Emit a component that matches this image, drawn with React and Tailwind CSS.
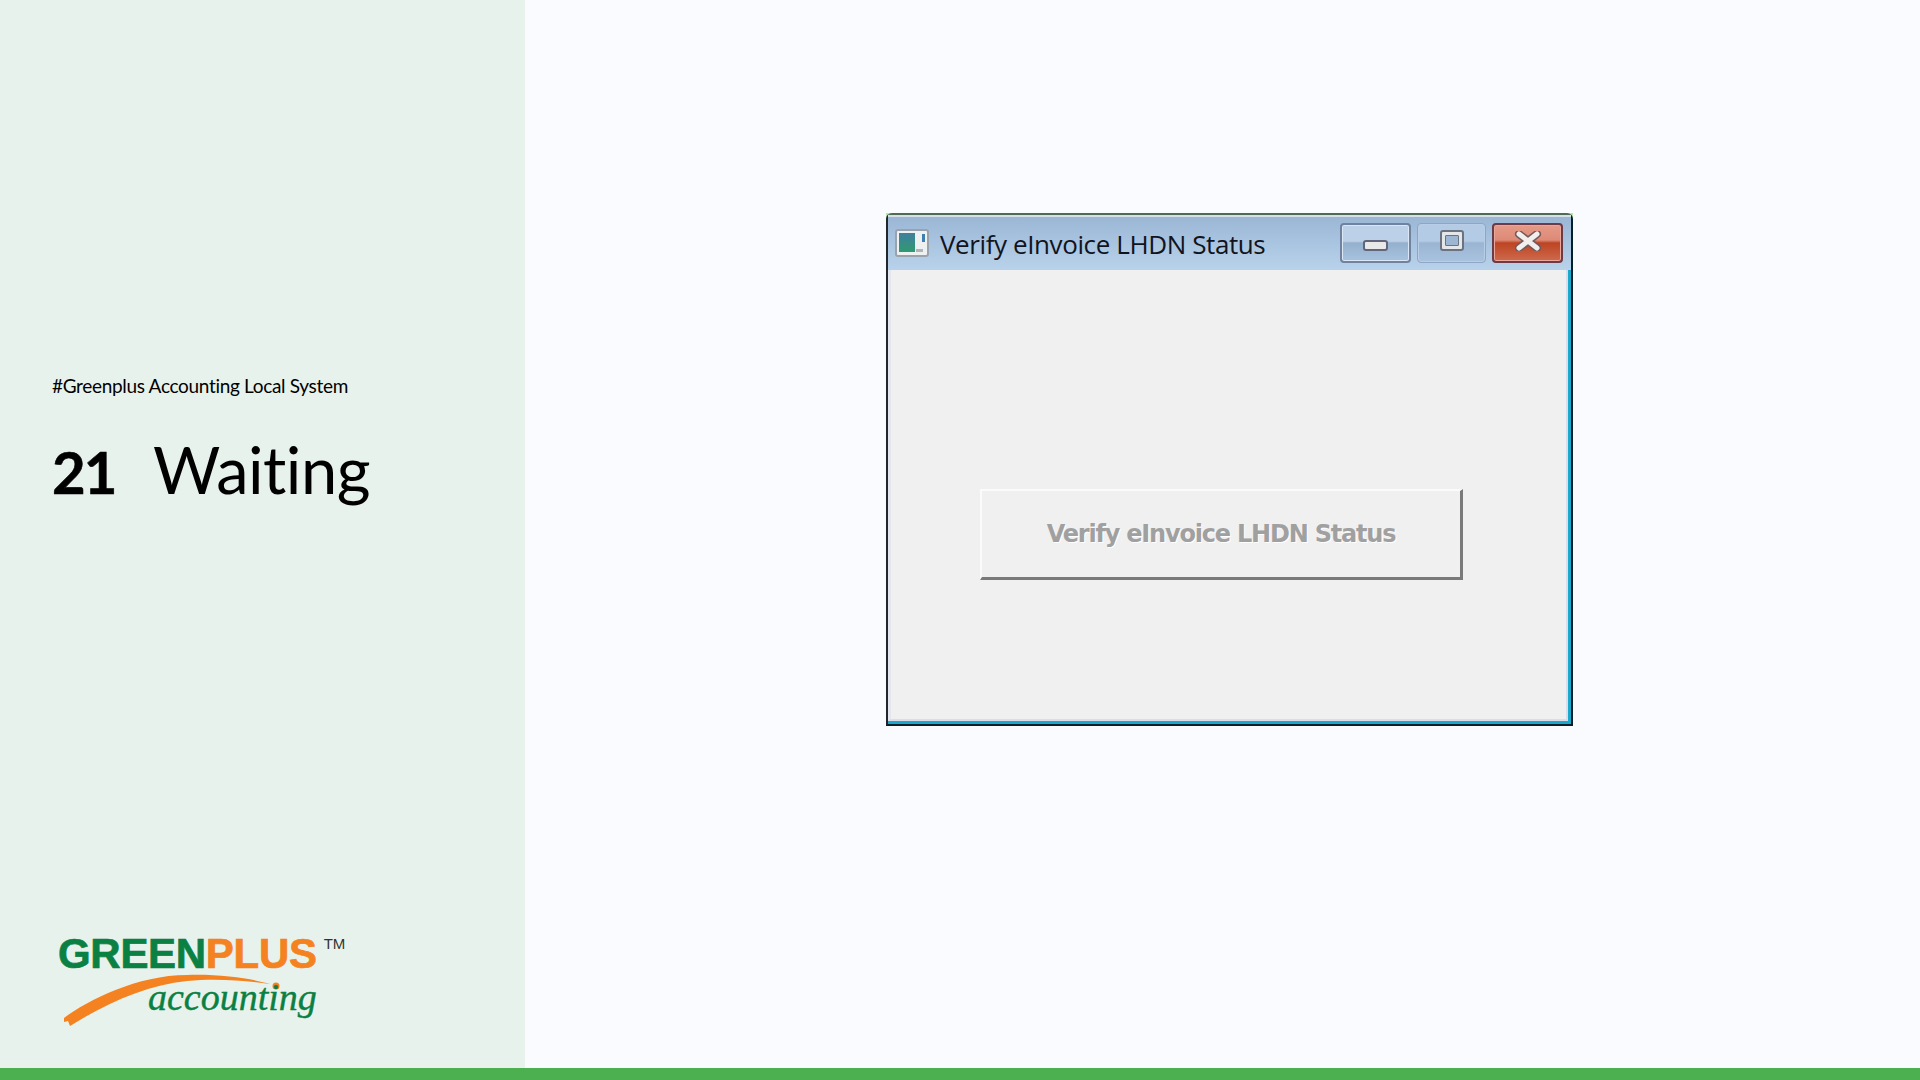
import React from 'react';

function CaptionButtons() {
  return (
    <div className="flex items-center">
      <div className="w-[71px] h-[40px] rounded-[4px] border-2 border-[#6f83a0] shadow-[inset_0_0_0_1px_#dbe7f4] bg-[linear-gradient(#bcd0e8_0%,#bcd0e8_45%,#94b0cd_50%,#a9c3df_100%)] flex items-center justify-center">
        <div className="w-[25px] h-[11px] mt-[5px] rounded-[3px] bg-[#e9e9ea] border-2 border-[#62667a]" />
      </div>
      <div className="ml-[6px] w-[69px] h-[40px] rounded-[4px] border border-[#8ea6c3] shadow-[inset_0_0_0_1px_#b9cee6] bg-[linear-gradient(#b4cbe5_0%,#b4cbe5_45%,#9ab5d2_50%,#a9c3df_100%)] flex items-center justify-center">
        <div className="w-[24px] h-[21px] mb-[5px] rounded-[3px] border-2 border-[#6b7280] bg-[#e4e6ea] p-[3px]">
          <div className="w-full h-full rounded-[1px] border border-[#6b7280] bg-[#9db6d2]" />
        </div>
      </div>
      <div className="ml-[6px] w-[71px] h-[40px] rounded-[4px] border-2 border-[#6e3a45] shadow-[inset_0_0_0_1px_#e9a79b] bg-[linear-gradient(#e59a88_0%,#dd8a76_42%,#bd4422_50%,#cf6a4d_100%)] flex items-center justify-center">
        <svg viewBox="0 0 28 20" className="w-[28px] h-[20px] mb-[4px]">
          <path d="M5 3l18 14M23 3L5 17" fill="none" stroke="#75585a" strokeWidth="8" strokeLinecap="round" />
          <path d="M5 3l18 14M23 3L5 17" fill="none" stroke="#f1eeee" strokeWidth="5" strokeLinecap="round" />
        </svg>
      </div>
    </div>
  );
}

function WindowMock() {
  return (
    <div className="relative w-[687px] h-[513px]">
      <div className="absolute left-0 top-0 w-[6px] h-[6px] bg-[#b4e8ac]" />
      <div className="absolute right-0 top-0 w-[6px] h-[6px] bg-[#b4e8ac]" />
      <div className="relative w-full h-full flex flex-col rounded-t-[6px] border-2 border-t-[#4f6b55] border-l-[#20262c] border-r-[#06202b] border-b-[#06202b] bg-[#a6c1dd]">
        <div className="h-[55px] shrink-0 flex items-center pl-[7px] pr-[8px] bg-[linear-gradient(#99b6d4_0%,#a9c4e0_50%,#b9d2eb_100%)] shadow-[inset_0_2px_0_#d5dfe9]">
          <div className="w-[34px] h-[28px] rounded-[3px] border-2 border-[#9aa3ad] bg-[#eef1f2] flex items-center pl-[2px] relative">
            <div className="w-[16px] h-[19px] bg-[linear-gradient(#3f7f9f,#2f9a6f)]" />
            <div className="absolute right-[2px] top-[3px] w-[3px] h-[8px] bg-[#3f7fb0]" />
            <div className="absolute right-[4px] bottom-[3px] w-[7px] h-[3px] bg-[#b0b4b8]" />
          </div>
          <span className="ml-[11px] mt-[3px] text-[26px] tracking-[-0.4px] text-[#10141f] font-['Open_Sans',sans-serif]">Verify eInvoice LHDN Status</span>
          <div className="ml-auto mt-[1px]">
            <CaptionButtons />
          </div>
        </div>
        <div className="flex-1 min-h-0 border-r-[3px] border-b-[3px] border-r-[#1aa8cc] border-b-[#1aa8cc]">
          <div className="h-full bg-[#f0f0f0] border-l-[3px] border-r-2 border-b-2 border-l-[#e3e6ee] border-r-[#dcdde8] border-b-[#dcdde8] flex items-start pl-[89px] pt-[219px]">
            <button className="w-[483px] h-[91px] bg-[#f0f0f0] border-t-2 border-l-2 border-t-[#fbfbfb] border-l-[#fbfbfb] border-r-[3px] border-b-[3px] border-r-[#7a7a7a] border-b-[#7a7a7a] text-[24px] font-bold text-[#a0a0a0] [text-shadow:1px_1px_0_#ffffff] font-['DejaVu_Sans',sans-serif] tracking-[-1.2px]">
              Verify eInvoice LHDN Status
            </button>
          </div>
        </div>
      </div>
    </div>
  );
}

function Logo() {
  return (
    <div className="relative w-[300px] h-[100px] ml-[6px]">
      <div className="flex items-start font-['Liberation_Sans',sans-serif] font-bold text-[42px] leading-[44px] [-webkit-text-stroke:0.7px_currentColor] tracking-[-0.3px] pt-[2px]">
        <span className="text-[#0b8043]">GREEN</span>
        <span className="text-[#f58220]">PLUS</span>
        <span className="ml-[7px] mt-[1px] text-[15px] leading-[22px] font-normal tracking-normal [-webkit-text-stroke:0px] text-[#333333]">TM</span>
      </div>
      <svg viewBox="0 0 300 100" className="absolute left-0 top-0 w-[300px] h-[100px]">
        <path d="M6 88 C30 70 80 45 129 45 C165 44 195 49 212 54 C190 51 160 48 129 51 C90 55 50 72 12 96 L10 91 L6 92 Z" fill="#f58220" />
        <circle cx="218" cy="56" r="3.5" fill="#f58220" />
      </svg>
      <span className="absolute left-[90px] top-[43px] text-[38px] leading-[48px] italic text-[#0b8043] font-['Liberation_Serif',serif] [-webkit-text-stroke:0.4px_currentColor]">accounting</span>
    </div>
  );
}

export default function App() {
  return (
    <div className="w-[1920px] h-[1080px] flex flex-col overflow-hidden bg-[#fafbff]">
      <div className="flex flex-1 min-h-0">
        <aside className="w-[525px] shrink-0 bg-[#e8f2ec] pl-[52px] pt-[372px] flex flex-col font-['Lato',sans-serif] text-black">
          <p className="text-[19px] leading-[28px] tracking-[-0.32px]">#Greenplus Accounting Local System</p>
          <h1 className="mt-[30px] text-[65px] leading-[78px] tracking-[-0.5px] flex items-baseline">
            <span className="font-bold w-[101px] text-[58px] tracking-[-2px] [-webkit-text-stroke:0.6px_currentColor]">21</span>
            <span>Waiting</span>
          </h1>
          <div className="mt-[419px]">
            <Logo />
          </div>
        </aside>
        <main className="flex-1 pl-[361px] pt-[213px]">
          <WindowMock />
        </main>
      </div>
      <div className="h-[12px] shrink-0 bg-[#4caf50]" />
    </div>
  );
}
